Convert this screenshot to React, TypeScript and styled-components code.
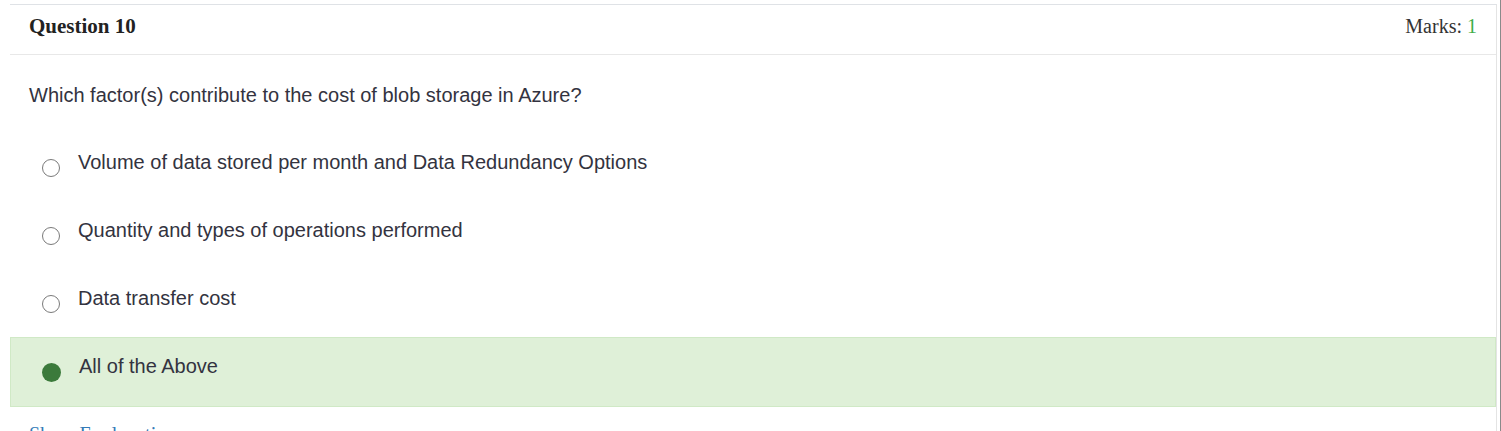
import React from "react";
import styled, { createGlobalStyle } from "styled-components";

const GlobalStyle = createGlobalStyle`
  html, body { margin: 0; padding: 0; background: #ffffff; }
  body { font-family: "Liberation Serif", "Times New Roman", serif; overflow: hidden; }
  * { box-sizing: border-box; }
`;

const Page = styled.div`
  min-height: 431px;
  padding: 4px 3px 0 10px;
  border-right: 1px solid #8a8a8a;
`;

const Card = styled.section`
  border-top: 1px solid #dfe2e6;
  border-right: 1px solid #e4e4e4;
`;

const Header = styled.header`
  display: flex;
  justify-content: space-between;
  align-items: center;
  padding: 10px 19px 16px 19px;
  border-bottom: 1px solid #e8e8e8;
  font-family: "Liberation Serif", "Times New Roman", serif;
  font-size: 20px;
  line-height: 23px;
  color: #333333;
`;

const Title = styled.h3`
  margin: 0;
  font-size: 21px;
  font-weight: bold;
  color: #222222;
`;

const Marks = styled.div`
  font-size: 20px;
  color: #333333;
`;

const MarksValue = styled.span`
  color: #3fae49;
`;

const QuestionText = styled.p`
  margin: 0;
  padding: 29px 19px 0 19px;
  font-family: "Liberation Sans", Arial, sans-serif;
  font-size: 20px;
  line-height: 23px;
  color: #333340;
`;

const Options = styled.div`
  display: flex;
  flex-direction: column;
  margin-top: 26px;
`;

const Option = styled.div<{ $correct?: boolean }>`
  display: flex;
  align-items: center;
  height: 70px;
  margin-bottom: -2px;
  padding-left: 31px;
  border: 1px solid ${(p) => (p.$correct ? "#d0e9c6" : "transparent")};
  background: ${(p) => (p.$correct ? "#dff0d8" : "transparent")};
`;

const Radio = styled.span<{ $checked?: boolean }>`
  flex: none;
  width: ${(p) => (p.$checked ? "19px" : "18px")};
  height: ${(p) => (p.$checked ? "19px" : "18px")};
  border-radius: 50%;
  border: ${(p) => (p.$checked ? "none" : "1.5px solid #7a7a7a")};
  background: ${(p) => (p.$checked ? "#3b7a3b" : "#ffffff")};
`;

const OptionLabel = styled.span`
  margin-left: 18px;
  margin-bottom: 12px;
  font-family: "Liberation Sans", Arial, sans-serif;
  font-size: 20px;
  line-height: 23px;
  color: #333340;
`;

const ExplanationLink = styled.a`
  display: block;
  margin-top: 18px;
  padding-left: 19px;
  font-family: "Liberation Serif", "Times New Roman", serif;
  font-size: 20px;
  line-height: 23px;
  color: #337ab7;
  text-decoration: none;
`;

const options = [
  { text: "Volume of data stored per month and Data Redundancy Options", correct: false },
  { text: "Quantity and types of operations performed", correct: false },
  { text: "Data transfer cost", correct: false },
  { text: "All of the Above", correct: true },
];

export default function App() {
  return (
    <>
      <GlobalStyle />
      <Page>
        <Card>
          <Header>
            <Title>Question 10</Title>
            <Marks>
              Marks: <MarksValue>1</MarksValue>
            </Marks>
          </Header>
          <QuestionText>Which factor(s) contribute to the cost of blob storage in Azure?</QuestionText>
          <Options>
            {options.map((o) => (
              <Option key={o.text} $correct={o.correct}>
                <Radio $checked={o.correct} />
                <OptionLabel>{o.text}</OptionLabel>
              </Option>
            ))}
          </Options>
          <ExplanationLink href="#">Show Explanation</ExplanationLink>
        </Card>
      </Page>
    </>
  );
}
